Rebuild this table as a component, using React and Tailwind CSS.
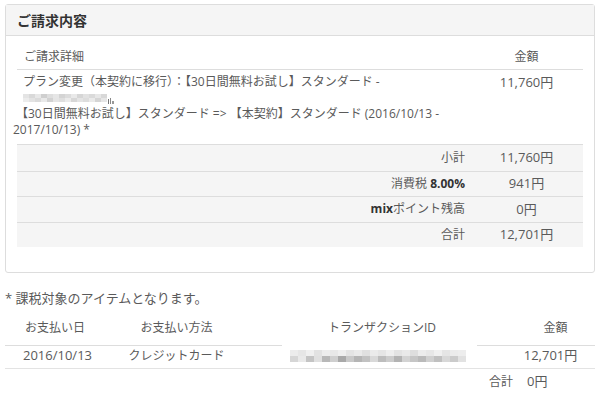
import React from 'react';

// masked customer name (pixelated)
const NAME_MASK = [
  ['bg-[#e4e4e4]', 'bg-[#d9d9d9]', 'bg-[#e8e8e8]', 'bg-[#cfcfcf]', 'bg-[#dedede]', 'bg-[#e6e6e6]', 'bg-[#d4d4d4]', 'bg-[#dcdcdc]', 'bg-[#e9e9e9]', 'bg-[#d6d6d6]', 'bg-[#e2e2e2]', 'bg-[#dadada]', 'bg-[#e7e7e7]', 'bg-[#d8d8d8]'],
  ['bg-[#ececec]', 'bg-[#e3e3e3]', 'bg-[#dbdbdb]', 'bg-[#e9e9e9]', 'bg-[#d2d2d2]', 'bg-[#e5e5e5]', 'bg-[#dfdfdf]', 'bg-[#ebebeb]', 'bg-[#d7d7d7]', 'bg-[#e4e4e4]', 'bg-[#dddddd]', 'bg-[#eaeaea]', 'bg-[#d5d5d5]', 'bg-[#e6e6e6]'],
];

// masked transaction id (pixelated)
const TX_MASK = [
  ['bg-[#ececec]', 'bg-[#e6e6e6]', 'bg-[#f0f0f0]', 'bg-[#e2e2e2]', 'bg-[#ededed]', 'bg-[#e8e8e8]', 'bg-[#efefef]', 'bg-[#e4e4e4]', 'bg-[#eaeaea]', 'bg-[#e0e0e0]', 'bg-[#ebebeb]', 'bg-[#e5e5e5]', 'bg-[#eeeeee]', 'bg-[#e3e3e3]', 'bg-[#e9e9e9]', 'bg-[#dedede]', 'bg-[#ececec]', 'bg-[#e7e7e7]', 'bg-[#f0f0f0]', 'bg-[#e5e5e5]', 'bg-[#ebebeb]', 'bg-[#ededed]'],
  ['bg-[#d6d6d6]', 'bg-[#e9e9e9]', 'bg-[#c4c4c4]', 'bg-[#e0e0e0]', 'bg-[#b8b8b8]', 'bg-[#cfcfcf]', 'bg-[#a9a9a9]', 'bg-[#c9c9c9]', 'bg-[#b5b5b5]', 'bg-[#c2c2c2]', 'bg-[#d9d9d9]', 'bg-[#bdbdbd]', 'bg-[#cccccc]', 'bg-[#b3b3b3]', 'bg-[#d3d3d3]', 'bg-[#c6c6c6]', 'bg-[#bababa]', 'bg-[#d0d0d0]', 'bg-[#c0c0c0]', 'bg-[#d8d8d8]', 'bg-[#cbcbcb]', 'bg-[#e2e2e2]'],
];

const Mask = ({ rows, cell }) => (
  <div className="flex flex-col">
    {rows.map((row, i) => (
      <div key={i} className="flex">
        {row.map((c, j) => (
          <span key={j} className={`${cell} ${c}`} />
        ))}
      </div>
    ))}
  </div>
);

const summary = [
  { label: '小計', value: '11,760円' },
  { label: <>消費税 <b className="text-[#333]">8.00%</b></>, value: '941円' },
  { label: <><b className="text-[#333]">mix</b>ポイント残高</>, value: '0円' },
  { label: '合計', value: '12,701円' },
];

export default function App() {
  return (
    <div className="w-[600px] h-[393px] bg-white overflow-hidden font-['Open_Sans','Noto_Sans_CJK_JP',sans-serif] text-[12px] text-[#5a5a5a]">
      <div className="px-[5px] pt-[4px]">
        {/* billing panel */}
        <div className="border border-[#dddddd] rounded-[3px]">
          <div className="h-[31px] bg-[#f5f5f5] border-b border-[#dddddd] px-[11px] flex items-center text-[14px] font-bold text-[#333]">
            ご請求内容
          </div>

          <div className="px-[11px] pt-[9px] pb-[25px]">
            <div className="flex h-[25px] items-center border-b border-[#dddddd]">
              <div className="w-[453px] pl-[7px]">ご請求詳細</div>
              <div className="flex-1 text-center">金額</div>
            </div>

            <div className="flex border-b border-[#dddddd] pt-[4px] pb-[6px] leading-[16px]">
              <div className="w-[453px] pl-[6px]">
                <div className="whitespace-nowrap">プラン変更（本契約に移行）：【30日間無料お試し】スタンダード -</div>
                <div className="h-[16px] flex items-center">
                  <Mask rows={NAME_MASK} cell="w-[6px] h-[4px]" />
                  <div className="ml-[1px] mt-[6px] flex items-end gap-[1px]">
                    <span className="w-[1px] h-[5px] bg-[#777]" />
                    <span className="w-[1px] h-[6px] bg-[#888]" />
                    <span className="w-[2px] h-[3px] bg-[#999]" />
                  </div>
                </div>
                <div className="whitespace-nowrap -ml-[7px]">【30日間無料お試し】スタンダード =&gt; 【本契約】スタンダード (2016/10/13 -</div>
                <div className="whitespace-nowrap -ml-[10px]">2017/10/13) *</div>
              </div>
              <div className="flex-1 text-center text-[13px]">11,760円</div>
            </div>

            <div className="bg-[#f5f5f5]">
              {summary.map((row, i) => (
                <div key={i} className={`flex h-[25.5px] items-center ${i > 0 ? 'border-t border-[#dddddd]' : ''}`}>
                  <div className="w-[453px] pr-[5px] text-right">{row.label}</div>
                  <div className="flex-1 text-center text-[13px]">{row.value}</div>
                </div>
              ))}
            </div>
          </div>
        </div>

        <p className="mt-[16px] text-[13px] leading-[18px]">* 課税対象のアイテムとなります。</p>

        {/* payment history */}
        <div className="mt-[12px]">
          <div className="grid grid-cols-[100px_143px_268px_79px] h-[25px] items-end">
            <div className="pl-[20px] pb-[8px] border-b border-[#dddddd]">お支払い日</div>
            <div className="text-center pb-[8px] border-b border-[#dddddd]">お支払い方法</div>
            <div className="flex flex-col">
              <div className="text-center pb-[8px]">トランザクションID</div>
              <div className="flex h-[1px]">
                <span className="w-[34px] bg-[#dddddd]" />
                <span className="w-[195px]" />
                <span className="flex-1 bg-[#dddddd]" />
              </div>
            </div>
            <div className="text-center pb-[8px] border-b border-[#dddddd]">金額</div>
          </div>

          <div className="grid grid-cols-[100px_143px_268px_79px] h-[25px] items-center border-b border-[#e3e3e3]">
            <div className="pl-[18px] text-[13px]">2016/10/13</div>
            <div className="text-center">クレジットカード</div>
            <div className="pl-[42px]">
              <Mask rows={TX_MASK} cell="w-[8px] h-[6px]" />
            </div>
            <div className="text-center pr-[10px] text-[13px]">12,701円</div>
          </div>

          <div className="grid grid-cols-[100px_143px_268px_79px] h-[25px] items-center">
            <div />
            <div />
            <div className="text-right pr-[3px]">合計</div>
            <div className="pl-[11px] text-[13px]">0円</div>
          </div>
        </div>
      </div>
    </div>
  );
}
